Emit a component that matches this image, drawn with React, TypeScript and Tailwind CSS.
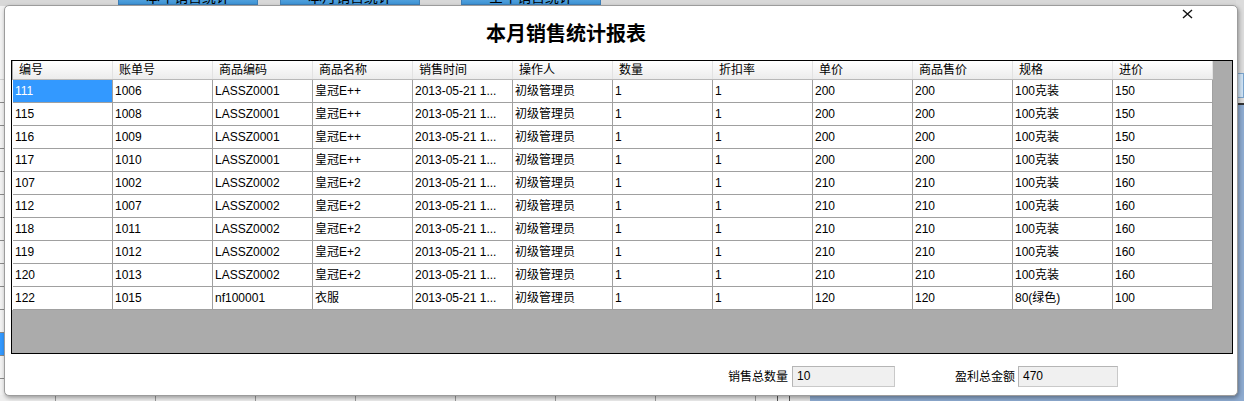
import React from "react";

const columns = ["编号", "账单号", "商品编码", "商品名称", "销售时间", "操作人", "数量", "折扣率", "单价", "商品售价", "规格", "进价"];

const rows: string[][] = [
  ["111", "1006", "LASSZ0001", "皇冠E++", "2013-05-21 1...", "初级管理员", "1", "1", "200", "200", "100克装", "150"],
  ["115", "1008", "LASSZ0001", "皇冠E++", "2013-05-21 1...", "初级管理员", "1", "1", "200", "200", "100克装", "150"],
  ["116", "1009", "LASSZ0001", "皇冠E++", "2013-05-21 1...", "初级管理员", "1", "1", "200", "200", "100克装", "150"],
  ["117", "1010", "LASSZ0001", "皇冠E++", "2013-05-21 1...", "初级管理员", "1", "1", "200", "200", "100克装", "150"],
  ["107", "1002", "LASSZ0002", "皇冠E+2", "2013-05-21 1...", "初级管理员", "1", "1", "210", "210", "100克装", "160"],
  ["112", "1007", "LASSZ0002", "皇冠E+2", "2013-05-21 1...", "初级管理员", "1", "1", "210", "210", "100克装", "160"],
  ["118", "1011", "LASSZ0002", "皇冠E+2", "2013-05-21 1...", "初级管理员", "1", "1", "210", "210", "100克装", "160"],
  ["119", "1012", "LASSZ0002", "皇冠E+2", "2013-05-21 1...", "初级管理员", "1", "1", "210", "210", "100克装", "160"],
  ["120", "1013", "LASSZ0002", "皇冠E+2", "2013-05-21 1...", "初级管理员", "1", "1", "210", "210", "100克装", "160"],
  ["122", "1015", "nf100001", "衣服", "2013-05-21 1...", "初级管理员", "1", "1", "120", "120", "80(绿色)", "100"],
];

const topButtons = [
  { label: "本年销售统计", left: "left-[118px]" },
  { label: "本月销售统计", left: "left-[280px]" },
  { label: "全年销售统计", left: "left-[461px]" },
];

// the main window peeking out round the dialog
function Backdrop() {
  return (
    <>
      <div className="absolute left-0 top-0 h-[6px] w-full bg-[#d8d8d8]" />
      {topButtons.map((b) => (
        <div
          key={b.label}
          className={`absolute top-[-17px] flex h-[22px] w-[140px] items-end justify-center border border-[#3d7fb8] bg-gradient-to-b from-[#8cc6f0] to-[#3e95d6] text-[14px] leading-[14px] ${b.left}`}
        >
          {b.label}
        </div>
      ))}

      <div className="absolute left-0 top-[6px] flex h-[395px] w-[5px] flex-col bg-[#f2f2f2]">
        <div className="h-[74px] border-b border-[#d0d0d0]" />
        {Array.from({ length: 13 }).map((_, i) => (
          <div key={i} className={`h-[23px] shrink-0 border-b border-[#8a8a8a] ${i === 11 ? "bg-[#3399ff]" : ""}`} />
        ))}
      </div>

      <div className="absolute right-0 top-0 flex h-full w-[8px] flex-col">
        <div className="h-[73px] bg-[#dcdcdc]" />
        <div className="h-[25px] border border-[#7aa4cc] bg-[#cfe3f5]" />
        <div className="h-[5px] bg-[#dcdcdc]" />
        <div className="flex-1 border-t-2 border-[#333] bg-[#8eabd0]" />
      </div>

      <div className="absolute bottom-0 left-0 flex h-[6px] w-full bg-[#eeeeee]">
        <div className="w-[56px] border-r border-[#9a9a9a]" />
        {Array.from({ length: 7 }).map((_, i) => (
          <div key={i} className="w-[100px] border-r border-[#9a9a9a]" />
        ))}
        <div className="w-[22px] border-r border-[#555]" />
        <div className="w-[12px] border-r border-[#555]" />
        <div className="w-[20px] bg-[#e4e4e4]" />
        <div className="flex-1 bg-[#8eabd0]" />
      </div>
    </>
  );
}

function CloseGlyph() {
  return (
    <svg width="11" height="10" viewBox="0 0 11 10" className="block">
      <path d="M1 1 L10 9 M10 1 L1 9" stroke="#111" strokeWidth="1.4" fill="none" />
    </svg>
  );
}

function SalesGrid() {
  return (
    <div className="ml-[6px] flex h-[294px] w-[1222px] flex-col border border-black bg-[#ababab]">
      <div className="ml-[1px] flex h-[19px] w-[1200px] border-b border-[#b8b8b8] bg-gradient-to-b from-white to-[#ececec]">
        {columns.map((c) => (
          <div key={c} className="flex w-[100px] shrink-0 items-center border-r border-[#e2e2e2] pl-[6px] text-[12px] leading-[14px] text-black">
            {c}
          </div>
        ))}
      </div>
      {rows.map((r, ri) => (
        <div key={ri} className="flex w-[1201px] border-l border-white">
          {r.map((v, ci) => {
            const selected = ri === 0 && ci === 0;
            return (
              <div
                key={ci}
                className={`flex h-[23px] w-[100px] shrink-0 items-center overflow-hidden whitespace-nowrap border-b border-r border-[#a0a0a0] pl-[2px] text-[12px] leading-[14px] ${
                  selected ? "bg-[#3399ff] text-white" : "bg-white text-black"
                }`}
              >
                {v}
              </div>
            );
          })}
        </div>
      ))}
    </div>
  );
}

function ReadBox({ value, wide }: { value: string; wide?: boolean }) {
  return (
    <div className={`h-[21px] border border-[#c9c9c9] border-t-[#b5b5b5] border-l-[#b5b5b5] bg-[#f0f0f0] pl-[4px] pt-[2px] text-[12px] leading-[14px] text-black ${wide ? "w-[103px]" : "w-[100px]"}`}>
      {value}
    </div>
  );
}

export default function App() {
  return (
    <div className="relative h-[401px] w-[1244px] overflow-hidden bg-[#dcdcdc] font-['Liberation_Sans','Noto_Sans_CJK_SC',sans-serif]">
      <Backdrop />

      <div className="absolute left-[4px] top-[5px] flex h-[391px] w-[1234px] flex-col rounded-[5px] border border-[#9c9c9c] bg-white shadow-[1px_2px_4px_rgba(0,0,0,0.35)]">
        <div className="relative flex h-[54px] items-center pl-[481px]">
          <h1 className="text-[20px] font-bold leading-[24px] text-black font-['Noto_Sans_CJK_SC',sans-serif]">本月销售统计报表</h1>
          <button className="absolute left-[1177px] top-[3px] p-0">
            <CloseGlyph />
          </button>
        </div>

        <SalesGrid />

        <div className="flex items-center pl-[723px] pt-[12px] text-[12px] text-black">
          <span className="w-[64px]">销售总数量</span>
          <ReadBox value="10" wide />
          <span className="ml-[60px] w-[63px]">盈利总金额</span>
          <ReadBox value="470" />
        </div>
      </div>
    </div>
  );
}
